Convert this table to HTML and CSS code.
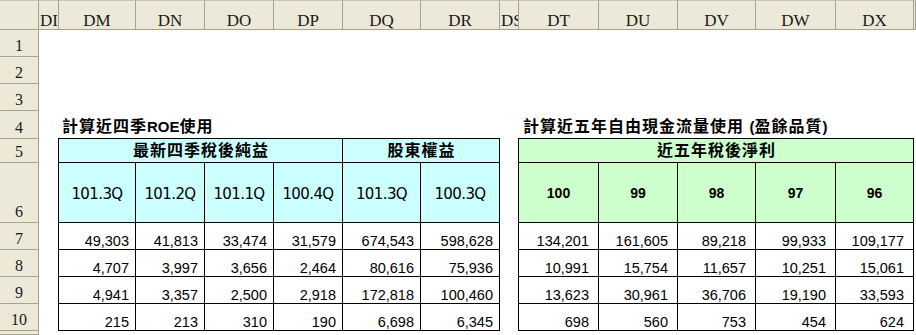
FILE: index.html
```html
<!DOCTYPE html>
<html lang="zh-Hant">
<head>
<meta charset="utf-8">
<title>Sheet</title>
<link rel="stylesheet" href="styles.css">
</head>
<body>
<div class="sheet">
  <div class="corner"></div>
  <div class="colheads">
    <div class="ch narrow">DI</div>
    <div class="ch">DM</div>
    <div class="ch">DN</div>
    <div class="ch">DO</div>
    <div class="ch">DP</div>
    <div class="ch">DQ</div>
    <div class="ch">DR</div>
    <div class="ch narrow">DS</div>
    <div class="ch">DT</div>
    <div class="ch">DU</div>
    <div class="ch">DV</div>
    <div class="ch">DW</div>
    <div class="ch">DX</div>
    <div class="ch"></div>
  </div>
  <div class="rowheads">
    <div class="rh">1</div>
    <div class="rh">2</div>
    <div class="rh">3</div>
    <div class="rh">4</div>
    <div class="rh">5</div>
    <div class="rh">6</div>
    <div class="rh">7</div>
    <div class="rh">8</div>
    <div class="rh">9</div>
    <div class="rh">10</div>
    <div class="rh"></div>
  </div>
  <div class="body">
    <div class="title title-a"><span>計算近四季<span class="latin">ROE</span>使用</span></div>
    <div class="title title-b"><span>計算近五年自由現金流量使用 <span class="latin">(</span>盈餘品質<span class="latin">)</span></span></div>

    <div class="tbl tbl-a">
      <div class="c grp blue span4">最新四季稅後純益</div>
      <div class="c grp blue span2">股東權益</div>
      <div class="c q blue">101.3Q</div>
      <div class="c q blue">101.2Q</div>
      <div class="c q blue">101.1Q</div>
      <div class="c q blue">100.4Q</div>
      <div class="c q blue">101.3Q</div>
      <div class="c q blue">100.3Q</div>

      <div class="c n">49,303</div><div class="c n">41,813</div><div class="c n">33,474</div><div class="c n">31,579</div><div class="c n">674,543</div><div class="c n">598,628</div>
      <div class="c n">4,707</div><div class="c n">3,997</div><div class="c n">3,656</div><div class="c n">2,464</div><div class="c n">80,616</div><div class="c n">75,936</div>
      <div class="c n">4,941</div><div class="c n">3,357</div><div class="c n">2,500</div><div class="c n">2,918</div><div class="c n">172,818</div><div class="c n">100,460</div>
      <div class="c n">215</div><div class="c n">213</div><div class="c n">310</div><div class="c n">190</div><div class="c n">6,698</div><div class="c n">6,345</div>
    </div>

    <div class="tbl tbl-b">
      <div class="c grp green span5">近五年稅後淨利</div>
      <div class="c yr green">100</div>
      <div class="c yr green">99</div>
      <div class="c yr green">98</div>
      <div class="c yr green">97</div>
      <div class="c yr green">96</div>

      <div class="c n">134,201</div><div class="c n">161,605</div><div class="c n">89,218</div><div class="c n">99,933</div><div class="c n">109,177</div>
      <div class="c n">10,991</div><div class="c n">15,754</div><div class="c n">11,657</div><div class="c n">10,251</div><div class="c n">15,061</div>
      <div class="c n">13,623</div><div class="c n">30,961</div><div class="c n">36,706</div><div class="c n">19,190</div><div class="c n">33,593</div>
      <div class="c n">698</div><div class="c n">560</div><div class="c n">753</div><div class="c n">454</div><div class="c n">624</div>
    </div>
  </div>
</div>
</body>
</html>
```

FILE: styles.css
```css
* { box-sizing: border-box; }

html, body {
  margin: 0;
  padding: 0;
  background: #ffffff;
}

body {
  width: 916px;
  height: 335px;
  overflow: hidden;
  font-family: "Liberation Sans", "Noto Sans CJK TC", sans-serif;
  color: #000;
  --cols: 20px 77px 69px 69px 69px 78px 79px 19px 80px 79px 78px 80px 78px 2px;
  --rows: 27px 27px 27px 28px 24px 60px 27px 27px 27px 27px 4px;
  --hdr-bg: #ECE9D8;
  --hdr-line: #A5A28F;
}

.sheet {
  display: grid;
  grid-template-columns: 39px 877px;
  grid-template-rows: 30px 305px;
}

.corner {
  background: var(--hdr-bg);
  border-top: 1px solid #C9C6B6;
  border-right: 1px solid var(--hdr-line);
  border-bottom: 1px solid var(--hdr-line);
}

.colheads {
  display: grid;
  grid-template-columns: var(--cols);
}

.ch {
  background: var(--hdr-bg);
  border-top: 1px solid #C9C6B6;
  border-right: 1px solid var(--hdr-line);
  border-bottom: 1px solid var(--hdr-line);
  display: flex;
  align-items: flex-end;
  justify-content: center;
  overflow: hidden;
  white-space: nowrap;
  font-family: "Liberation Serif", serif;
  font-size: 17px;
  line-height: 1;
  color: #1a1a1a;
}

.ch.narrow {
  justify-content: flex-start;
  padding-left: 1px;
}

.rowheads {
  display: grid;
  grid-template-rows: var(--rows);
}

.rh {
  background: var(--hdr-bg);
  border-right: 1px solid var(--hdr-line);
  border-bottom: 1px solid var(--hdr-line);
  display: flex;
  align-items: flex-end;
  justify-content: center;
  padding-bottom: 2px;
  font-family: "Liberation Serif", serif;
  font-size: 16px;
  line-height: 1;
  color: #1a1a1a;
}

.body {
  display: grid;
  grid-template-columns: var(--cols);
  grid-template-rows: var(--rows);
  background: #fff;
}

.title {
  grid-row: 4;
  display: flex;
  align-items: flex-end;
  padding: 0 0 4px 3px;
  font-size: 16px;
  font-weight: bold;
  letter-spacing: 1px;
  line-height: 1;
  white-space: nowrap;
}

.title .latin {
  letter-spacing: 0;
  font-size: 15px;
}

.title-a { grid-column: 2 / span 6; }
.title-b { grid-column: 9 / span 6; padding-left: 4px; }

.tbl {
  grid-row: 5 / span 6;
  margin: -1px 0 0 -1px;
  border-left: 1px solid #000;
  border-top: 1px solid #000;
  display: grid;
  grid-template-rows: 24px 60px 27px 27px 27px 27px;
}

.tbl-a {
  grid-column: 2 / span 6;
  grid-template-columns: 77px 69px 69px 69px 78px 79px;
}

.tbl-b {
  grid-column: 9 / span 5;
  grid-template-columns: 80px 79px 78px 80px 78px;
}

.c {
  border-right: 1px solid #000;
  border-bottom: 1px solid #000;
  display: flex;
  white-space: nowrap;
  overflow: hidden;
}

.blue { background: #CCFFFF; }
.green { background: #CCFFCC; }

.span4 { grid-column: span 4; }
.span2 { grid-column: span 2; }
.span5 { grid-column: span 5; }

.grp {
  align-items: center;
  justify-content: center;
  font-size: 16px;
  font-weight: bold;
  letter-spacing: 1px;
  padding-left: 1px;
  line-height: 1;
}

.q {
  align-items: center;
  justify-content: center;
  font-family: "DejaVu Sans", sans-serif;
  font-size: 15px;
  letter-spacing: -0.6px;
  padding-top: 3px;
  line-height: 1;
}

.yr {
  align-items: center;
  justify-content: center;
  font-size: 14px;
  font-weight: bold;
  line-height: 1;
}

.n {
  align-items: flex-end;
  justify-content: flex-end;
  font-size: 14.5px;
  line-height: 1;
  padding: 0 6px 1px 0;
}

.tbl-b .n { padding-right: 9px; }
```
